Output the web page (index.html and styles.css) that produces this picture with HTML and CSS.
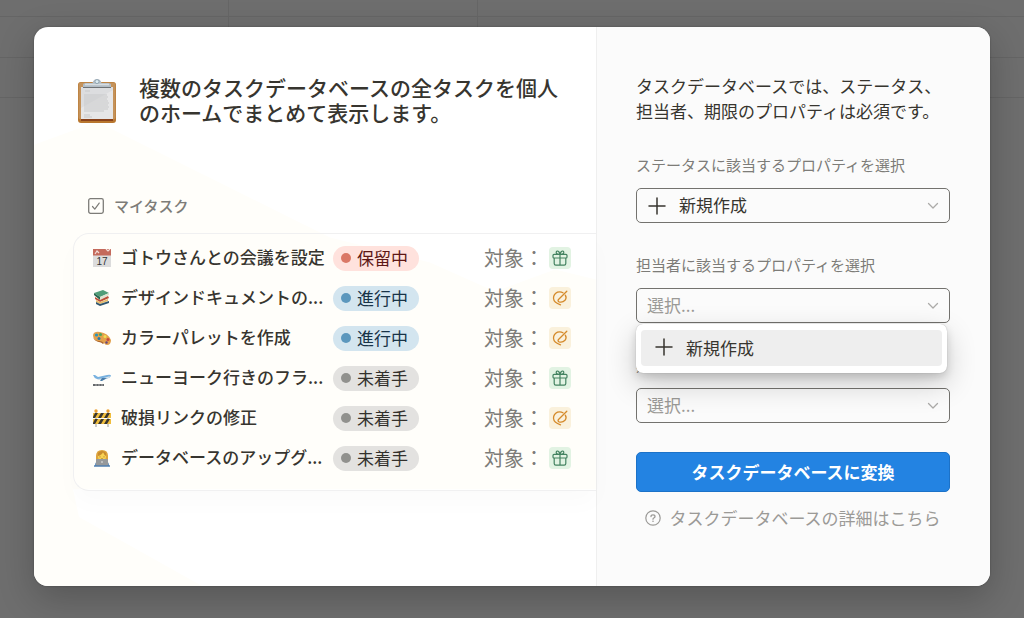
FILE: index.html
```html
<!DOCTYPE html>
<html lang="ja">
<head>
    <meta charset="UTF-8">
    <meta name="viewport" content="width=device-width, initial-scale=1.0">
    <title>タスクデータベースに変換</title>
    <link rel="stylesheet" href="styles.css">
</head>
<body>

<!-- shared icons -->
<svg class="sprite" aria-hidden="true">
    <symbol id="gift" viewBox="0 0 16 16">
        <g fill="none" stroke="currentColor" stroke-width="1.2" stroke-linejoin="round">
            <rect x="1" y="4.4" width="14" height="3.6" rx="1"/>
            <path d="M2.2 8v5.6q0 1.6 1.6 1.6h8.4q1.6 0 1.6-1.6V8M8 4.4v10.8M8 4.4C6 4.4 4.2 3.8 4.2 2.4 4.2.4 7.4.2 8 4.4C8.6.2 11.8.4 11.8 2.4 11.8 3.8 10 4.4 8 4.4"/>
        </g>
    </symbol>
    <symbol id="target" viewBox="0 0 16 16">
        <g fill="none" stroke="currentColor" stroke-width="1.3" stroke-linecap="round" stroke-linejoin="round">
            <path d="M11 2.800Q8.500 1.200 5.500 2.200Q1.500 4 1.500 8.300Q1.800 12.800 8.500 14.800"/>
            <path d="M14.800 1.300L6.500 9.500Q5.400 11 7 11.800Q10.500 12.800 13 10.300Q15 8 13.300 5.200"/>
        </g>
    </symbol>
    <symbol id="plus" viewBox="0 0 18 18">
        <path d="M9 1v16M1 9h16" fill="none" stroke="currentColor" stroke-width="1.5" stroke-linecap="round"/>
    </symbol>
    <symbol id="chevron" viewBox="0 0 12 8">
        <path d="M1.5 1.5L6 6l4.5-4.5" fill="none" stroke="currentColor" stroke-width="1.3" stroke-linecap="round" stroke-linejoin="round"/>
    </symbol>
</svg>

<main class="modal">

    <section class="preview">
        <svg class="preview-rays" viewBox="0 0 562 560" preserveAspectRatio="none" aria-hidden="true">
            <path d="M63 95L0 118V560H168L45 491 39 463H562V253L521 243 461 265 396 236 296 211Z" fill="#fffefa"/>
        </svg>

        <header class="preview-header">
            <svg class="clipboard" viewBox="0 0 40 46" aria-hidden="true">
                <rect x="1" y="4" width="38" height="41" rx="3" fill="#b9772f"/>
                <rect x="1.5" y="4.5" width="37" height="37" rx="2.5" fill="#c4925a"/>
                <path d="M4 40h32v3H4z" fill="#8a431c"/>
                <path d="M4 9h32v32H4z" fill="#e6e6e7"/>
                <path d="M4 9h32v3L4 30z" fill="#dcdddf"/>
                <path d="M8 13h5M7 17h23M7 19h24M7 21h23M7 23h24M7 25h25M7 27h24M7 29h25M7 31h24M7 33h20M7 37h6M7 39h8" stroke="#c8c9ca" stroke-width="1"/>
                <path d="M6 9.5V7q0-2 3-2h6.500q1-4 4.500-4t4.500 4H31q3 0 3 2v2.500z" fill="#b3bdc5"/>
                <path d="M8 6.500h24" stroke="#d6dde1" stroke-width="1.500"/>
                <circle cx="20" cy="3.600" r="2" fill="#dcebf1" stroke="#93a6b2"/>
                <path d="M6 9.500h28" stroke="#6e7275" stroke-width="1"/>
            </svg>
            <h1>複数のタスクデータベースの全タスクを個人のホームでまとめて表示します。</h1>
        </header>

        <h2 class="my-tasks">
            <svg width="16" height="16" viewBox="0 0 16 16" fill="none" stroke="currentColor" aria-hidden="true">
                <rect x=".7" y=".7" width="14.6" height="14.6" rx="1.8" stroke-width="1.3"/>
                <path d="M4.5 8.5l2.300 2.600 4.400-6" stroke-width="1.2" stroke-linecap="round" stroke-linejoin="round"/>
            </svg>
            マイタスク
        </h2>

        <ul class="task-card">
            <li class="task">
                <svg class="task-icon" viewBox="0 0 18 18" aria-hidden="true">
                    <path d="M0 1h18v17H0z" fill="#dcdcdc"/>
                    <path d="M0 0h18v6.500H0z" fill="#c46a5c"/>
                    <path d="M2 5l2-3 2 2M13 0l2 2 2-2" fill="none" stroke="#f3ded9" stroke-width="1.2"/>
                    <text x="9" y="16" class="cal-day">17</text>
                </svg>
                <span class="task-name">ゴトウさんとの会議を設定</span>
                <span class="status hold">保留中</span>
                <span class="goal">対象：</span>
                <span class="tile green"><svg><use href="#gift"/></svg></span>
            </li>
            <li class="task">
                <svg class="task-icon" viewBox="0 0 18 18" aria-hidden="true">
                    <path d="M1 4l9-3 6 3-9 4z" fill="#519d78"/>
                    <path d="M1 4l6 4v3L1 6z" fill="#29664f"/>
                    <path d="M7 8l9-4v2l-9 5z" fill="#dfe3cf"/>
                    <path d="M2 8l5 3 8-4 1 2-9 4-5-3z" fill="#bd4f37"/>
                    <path d="M3 11l4 2 8-3v2l-8 3-4-2z" fill="#e6bb6b"/>
                    <path d="M3 13l4 2 9-3v2l-9 3-4-2z" fill="#31566e"/>
                </svg>
                <span class="task-name">デザインドキュメントの...</span>
                <span class="status progress">進行中</span>
                <span class="goal">対象：</span>
                <span class="tile orange"><svg><use href="#target"/></svg></span>
            </li>
            <li class="task">
                <svg class="task-icon" viewBox="0 0 18 18" aria-hidden="true">
                    <path d="M0 6Q1 2 7 3q8 1 11 8 0 5-4 5-2 0-3-2-2-1-5-1Q0 11 0 6z" fill="#e3a04b"/>
                    <path d="M0 8q2 4 6 4 3 0 5 2l-1 1Q8 13 6 13 1 12 0 8z" fill="#a8612b"/>
                    <circle cx="3.5" cy="6" r="1.600" fill="#2595bd"/>
                    <circle cx="7.500" cy="5.500" r="1.600" fill="#4ca55d"/>
                    <circle cx="12" cy="7.500" r="1.500" fill="#eee054"/>
                    <circle cx="15" cy="10.500" r="1.500" fill="#c8483f"/>
                    <circle cx="13.500" cy="13.500" r="1.200" fill="#66467e"/>
                    <circle cx="6" cy="9.500" r="1.500" fill="#2877a9"/>
                </svg>
                <span class="task-name">カラーパレットを作成</span>
                <span class="status progress">進行中</span>
                <span class="goal">対象：</span>
                <span class="tile orange"><svg><use href="#target"/></svg></span>
            </li>
            <li class="task">
                <svg class="task-icon" viewBox="0 0 18 18" aria-hidden="true">
                    <path d="M0 6h2l3 2 9-2q4-1 4 1-1 2-5 3-6 1-9 0Q1 9 0 6z" fill="#78b1df"/>
                    <path d="M4 10q5 0 13-3-1 3-5 3-5 2-8 0z" fill="#d8e2e8"/>
                    <path d="M9 9l-2 3h2l5-3z" fill="#4a7ca8"/>
                    <path d="M0 15h11v2H0z" fill="#66696b"/>
                    <path d="M2 16h8" stroke="#ddd" stroke-width=".6" stroke-dasharray="2 1"/>
                </svg>
                <span class="task-name">ニューヨーク行きのフラ...</span>
                <span class="status todo">未着手</span>
                <span class="goal">対象：</span>
                <span class="tile green"><svg><use href="#gift"/></svg></span>
            </li>
            <li class="task">
                <svg class="task-icon" viewBox="0 0 18 18" aria-hidden="true">
                    <path d="M3 3v15M15 3v15" stroke="#a9a9a9" stroke-width="1.2"/>
                    <path d="M0 4h18v5H0zM0 10h18v5H0z" fill="#f0bd3c"/>
                    <path d="M2 4h3L2 9H0V8zM8 4h3L8 9H5zM14 4h3l-3 5h-3zM2 10h3l-3 5H0v-1zM8 10h3l-3 5H5zM14 10h3l-3 5h-3z" fill="#393630"/>
                    <circle cx="3" cy="2" r="1.700" fill="#ec9f31"/>
                    <circle cx="15" cy="2" r="1.700" fill="#ec9f31"/>
                </svg>
                <span class="task-name">破損リンクの修正</span>
                <span class="status todo">未着手</span>
                <span class="goal">対象：</span>
                <span class="tile orange"><svg><use href="#target"/></svg></span>
            </li>
            <li class="task">
                <svg class="task-icon" viewBox="0 0 18 18" aria-hidden="true">
                    <path d="M3 13V7q0-6 6-6t6 6v6z" fill="#dda33b"/>
                    <circle cx="9" cy="7.500" r="4" fill="#f9d252"/>
                    <path d="M5 7q4-1 5-4 1 3 3 4V4Q9 0 5 4z" fill="#c98b2c"/>
                    <path d="M7 7.500v.8M11 7.500v.8M8 10h2" stroke="#76501d" stroke-width=".8"/>
                    <path d="M2 17q0-5 4-5h6q4 0 4 5z" fill="#4d7eb0"/>
                    <rect x="3" y="10" width="12" height="7" rx="1" fill="#96999b"/>
                    <circle cx="9" cy="13" r=".8" fill="#eee"/>
                    <path d="M1 17h16" stroke="#4f7fb0" stroke-width="1.500"/>
                </svg>
                <span class="task-name">データベースのアップグ...</span>
                <span class="status todo">未着手</span>
                <span class="goal">対象：</span>
                <span class="tile green"><svg><use href="#gift"/></svg></span>
            </li>
        </ul>
    </section>

    <form class="settings">
        <p class="lead">タスクデータベースでは、ステータス、担当者、期限のプロパティは必須です。</p>

        <div class="field">
            <label for="status">ステータスに該当するプロパティを選択</label>
            <div class="select-box with-icon">
                <svg class="select-plus" aria-hidden="true"><use href="#plus"/></svg>
                <select id="status">
                    <option>新規作成</option>
                </select>
                <svg class="select-arrow" aria-hidden="true"><use href="#chevron"/></svg>
            </div>
        </div>

        <div class="field">
            <label for="assignee">担当者に該当するプロパティを選択</label>
            <div class="select-box">
                <select id="assignee" class="placeholder">
                    <option>選択...</option>
                </select>
                <svg class="select-arrow" aria-hidden="true"><use href="#chevron"/></svg>
                <div class="menu">
                    <button type="button" class="menu-item">
                        <svg aria-hidden="true"><use href="#plus"/></svg>
                        新規作成
                    </button>
                </div>
            </div>
        </div>

        <div class="field">
            <label for="due">期限に該当するプロパティを選択</label>
            <div class="select-box">
                <select id="due" class="placeholder">
                    <option>選択...</option>
                </select>
                <svg class="select-arrow" aria-hidden="true"><use href="#chevron"/></svg>
            </div>
        </div>

        <button type="submit" class="convert">タスクデータベースに変換</button>

        <a href="#" class="help">
            <svg width="16" height="16" viewBox="0 0 16 16" fill="none" stroke="currentColor" aria-hidden="true">
                <circle cx="8" cy="8" r="7.200" stroke-width="1.2"/>
                <path d="M6 6.500Q6 4.800 8 4.800t2 1.600Q10 7.400 8.800 8 8 8.400 8 9.200" stroke-width="1.3" stroke-linecap="round"/>
                <circle cx="8" cy="11.300" r=".8" fill="currentColor" stroke="none"/>
            </svg>
            タスクデータベースの詳細はこちら
        </a>
    </form>

</main>

</body>
</html>
```

FILE: styles.css
```css
* {
    box-sizing: border-box;
}

body {
    margin: 0;
    padding: 27px 34px 31px;
    min-height: 100vh;
    font-family: "Noto Sans CJK JP", sans-serif;
    font-size: 17px;
    color: #37352f;
    /* dimmed table behind the dialog */
    background-color: #6e6e6e;
    background-image:
        linear-gradient(#656565, #656565),
        linear-gradient(#656565, #656565),
        linear-gradient(#656565, #656565),
        linear-gradient(#666, #666),
        linear-gradient(#666, #666);
    background-size: 100% 1px, 100% 1px, 100% 1px, 1px 97px, 1px 97px;
    background-position: 0 16px, 0 57px, 0 97px, 228px 0, 477px 0;
    background-repeat: no-repeat;
}

h1, h2, p, ul {
    margin: 0;
    padding: 0;
}

.sprite {
    display: none;
}

.modal {
    display: grid;
    grid-template-columns: minmax(0, 1fr) 394px;
    border-radius: 14px;
    background: #fff;
    overflow: hidden;
    box-shadow: 0 0 2px rgba(0, 0, 0, .3), 0 12px 36px rgba(0, 0, 0, .22);
}

/* left side */
.preview {
    position: relative;
    padding: 48px 0 0 39px;
}

.preview-rays {
    position: absolute;
    inset: 0;
    width: 100%;
    height: 100%;
}

.preview-header {
    position: relative;
    display: flex;
    gap: 22px;
    padding: 0 30px 0 4px;
}

.clipboard {
    flex: none;
    width: 40px;
    height: 46px;
    margin-top: 3px;
}

h1 {
    font-size: 21px;
    line-height: 25px;
    font-weight: 500;
}

.my-tasks {
    position: relative;
    display: flex;
    align-items: center;
    gap: 10px;
    margin-top: 71px;
    padding-left: 15px;
    font-size: 15px;
    line-height: 20px;
    font-weight: 500;
    color: #7d7c78;
}

.task-card {
    position: relative;
    margin-top: 17px;
    padding: 4px 0 12px 19px;
    list-style: none;
    border: 1px solid #f0f0f1;
    border-right: 0;
    border-radius: 16px 0 0 16px;
    box-shadow: 0 12px 24px rgba(15, 15, 15, .02);
}

.task {
    display: flex;
    align-items: center;
    height: 40px;
}

.task-icon {
    flex: none;
    width: 18px;
    height: 18px;
    margin-right: 10px;
}

.cal-day {
    font: 10px "Liberation Sans", sans-serif;
    text-anchor: middle;
    fill: #333;
}

.task-name {
    width: 212px;
    padding-bottom: 3px;
    font-weight: 500;
    white-space: nowrap;
}

.status {
    display: flex;
    align-items: center;
    gap: 6px;
    height: 25px;
    padding: 0 11px 2px 8px;
    border-radius: 13px;
    font-size: 17px;
    white-space: nowrap;
}

.status::before {
    content: "";
    width: 10px;
    height: 10px;
    margin: 2px 0 0;
    border-radius: 50%;
}

.hold {
    background: #ffe2dd;
    color: #5d1715;
}

.hold::before {
    background: #da7866;
}

.progress {
    background: #d3e5ef;
    color: #183347;
}

.progress::before {
    background: #5b97bd;
}

.todo {
    background: #e3e2e0;
    color: #32302c;
}

.todo::before {
    background: #91918e;
}

.goal {
    margin-left: 65px;
    padding-bottom: 2px;
    font-size: 20px;
    line-height: 25px;
    color: #7d7c78;
}

.tile {
    display: flex;
    align-items: center;
    justify-content: center;
    width: 22px;
    height: 22px;
    margin-left: 5px;
    border-radius: 4px;
}

.tile svg {
    width: 16px;
    height: 16px;
}

.green {
    background: #e2f3e3;
    color: #448361;
}

.orange {
    background: #faf1dc;
    color: #d58a2a;
}

/* right side */
.settings {
    padding: 46px 40px 56px 39px;
    border-left: 1px solid #efefef;
    background: #fbfbfb;
}

.lead {
    margin-bottom: 32px;
    line-height: 25px;
}

.field {
    margin-bottom: 32px;
}

.field label {
    display: block;
    margin-bottom: 13px;
    font-size: 15px;
    line-height: 20px;
    color: #7d7c78;
}

.select-box {
    position: relative;
}

select {
    display: block;
    width: 100%;
    height: 35px;
    padding: 0 32px 2px 10px;
    appearance: none;
    border: 1px solid #73726e;
    border-radius: 5px;
    background: transparent;
    font: inherit;
    color: #37352f;
}

.with-icon select {
    padding-left: 42px;
}

.placeholder {
    color: #9b9a97;
}

.select-plus {
    position: absolute;
    left: 12px;
    top: 9px;
    width: 18px;
    height: 18px;
    pointer-events: none;
}

.select-arrow {
    position: absolute;
    right: 11px;
    top: 14px;
    width: 12px;
    height: 8px;
    color: #acaba9;
    pointer-events: none;
}

.menu {
    position: absolute;
    z-index: 1;
    top: 36px;
    left: 0;
    right: 3px;
    padding: 6px 5px 7px;
    border-radius: 7px;
    background: #fff;
    box-shadow: 0 0 1px rgba(15, 15, 15, .3), 0 4px 8px rgba(15, 15, 15, .15), 0 11px 30px rgba(15, 15, 15, .2);
}

.menu-item {
    display: flex;
    align-items: center;
    gap: 13px;
    width: 100%;
    height: 36px;
    padding: 0 14px 2px;
    border: 0;
    border-radius: 4px;
    background: #eee;
    font: inherit;
    color: #37352f;
    cursor: pointer;
}

.menu-item svg {
    width: 18px;
    height: 18px;
}

.convert {
    display: block;
    width: 100%;
    height: 40px;
    margin-top: -3px;
    padding-bottom: 3px;
    border: 1px solid #1c72c8;
    border-radius: 5px;
    background: #2383e2;
    font: inherit;
    font-weight: 700;
    color: #fff;
    cursor: pointer;
}

.convert:hover {
    background: #0077d4;
}

.help {
    display: flex;
    align-items: center;
    justify-content: center;
    gap: 8px;
    margin-top: 13px;
    line-height: 25px;
    color: #9b9a97;
    text-decoration: none;
}
```
